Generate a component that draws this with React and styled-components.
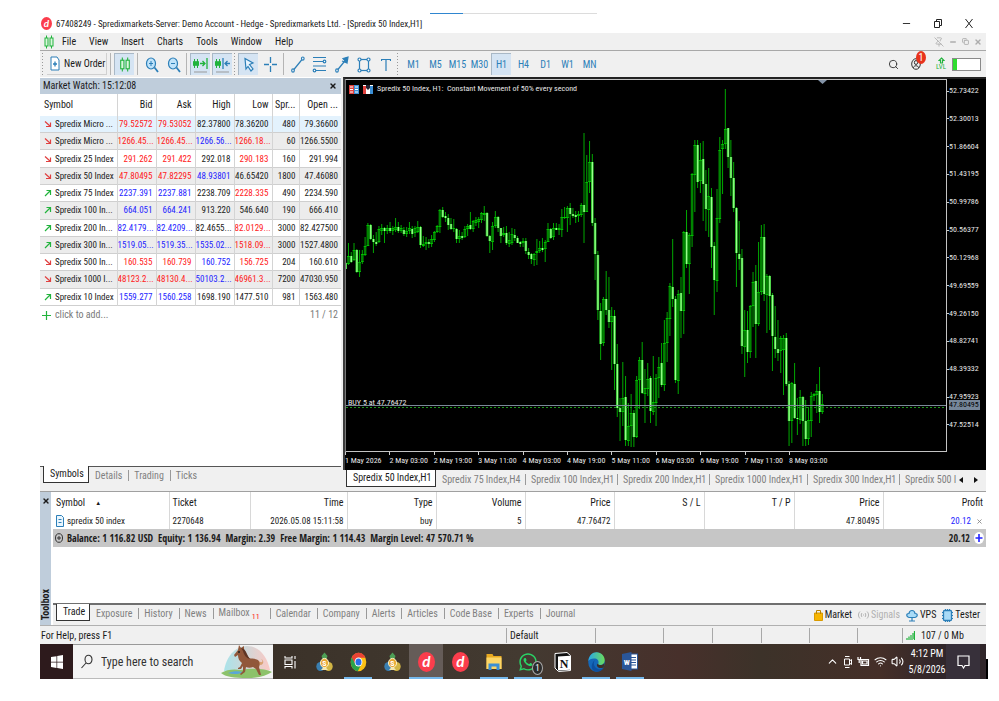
import React from 'react'
import styled, { createGlobalStyle } from 'styled-components'
import { Search, Minus, X, Copy, PinOff, ChevronUp, Wifi, Volume2 } from 'lucide-react'
import { FaWhatsapp } from 'react-icons/fa'

const GlobalStyle = createGlobalStyle`
  * {
    box-sizing: border-box;
  }
  body {
    margin: 0;
    background: #fff;
    color: #1b1b1b;
    font-family: "Roboto Condensed", Roboto, "Liberation Sans", sans-serif;
    font-size: 10px;
    line-height: 14px;
  }
  button, input {
    font: inherit;
    color: inherit;
    border: 0;
    padding: 0;
    margin: 0;
    background: none;
  }
  a {
    color: inherit;
    text-decoration: none;
  }
  svg {
    display: block;
    flex: none;
  }
  table {
    border-collapse: collapse;
    table-layout: fixed;
    width: 100%;
  }
  td, th {
    padding: 0;
    font-weight: 400;
    white-space: nowrap;
    overflow: hidden;
  }
`

// ---------- data ----------

const quotes = [
  { name: 'Spredix Micro ...', up: false, cells: [['79.52572', 'r'], ['79.53052', 'r'], ['82.37800'], ['78.36200'], ['480'], ['79.36600']] },
  { name: 'Spredix Micro ...', up: false, cells: [['1266.45...', 'r'], ['1266.45...', 'r'], ['1266.56...', 'b'], ['1266.18...', 'r'], ['60'], ['1266.5500']] },
  { name: 'Spredix 25 Index', up: false, cells: [['291.262', 'r'], ['291.422', 'r'], ['292.018'], ['290.183', 'r'], ['160'], ['291.994']] },
  { name: 'Spredix 50 Index', up: false, cells: [['47.80495', 'r'], ['47.82295', 'r'], ['48.93801', 'b'], ['46.65420'], ['1800'], ['47.46080']] },
  { name: 'Spredix 75 Index', up: true, cells: [['2237.391', 'b'], ['2237.881', 'b'], ['2238.709'], ['2228.335', 'r'], ['490'], ['2234.590']] },
  { name: 'Spredix 100 In...', up: true, cells: [['664.051', 'b'], ['664.241', 'b'], ['913.220'], ['546.640'], ['190'], ['666.410']] },
  { name: 'Spredix 200 In...', up: true, cells: [['82.4179...', 'b'], ['82.4209...', 'b'], ['82.4655...'], ['82.0129...', 'r'], ['3000'], ['82.427500']] },
  { name: 'Spredix 300 In...', up: true, cells: [['1519.05...', 'b'], ['1519.35...', 'b'], ['1535.02...', 'b'], ['1518.09...', 'r'], ['3000'], ['1527.4800']] },
  { name: 'Spredix 500 In...', up: false, cells: [['160.535', 'r'], ['160.739', 'r'], ['160.752', 'b'], ['156.725', 'r'], ['204'], ['160.610']] },
  { name: 'Spredix 1000 I...', up: false, cells: [['48123.2...', 'r'], ['48130.4...', 'r'], ['50103.2...', 'b'], ['46961.3...', 'r'], ['7200'], ['47030.950']] },
  { name: 'Spredix 10 Index', up: true, cells: [['1559.277', 'b'], ['1560.258', 'b'], ['1698.190'], ['1477.510'], ['981'], ['1563.480']] },
]

const prices = ['52.73422', '52.30013', '51.86604', '51.43195', '50.99786', '50.56377', '50.12968', '49.69559', '49.26150', '48.82741', '48.39332', '47.95923', '47.52514']
const times = ['1 May 2026', '2 May 03:00', '2 May 19:00', '3 May 11:00', '4 May 03:00', '4 May 19:00', '5 May 11:00', '6 May 03:00', '6 May 19:00', '7 May 11:00', '8 May 03:00']

// [high, body top, body bottom, low, 1 = falling]
const candles = [
  [182,183,189,189,1],[163,176,184,185,0],[172,176,182,183,1],[163,170,180,181,0],[169,170,192,193,1],[170,182,192,197,0],
  [170,174,182,184,0],[157,166,175,176,0],[143,145,166,166,0],[144,145,159,160,1],[155,159,162,173,1],[152,162,164,166,1],
  [146,149,162,163,0],[144,148,151,155,0],[147,148,151,163,1],[145,148,151,154,0],[142,148,151,153,1],[146,148,151,155,0],
  [138,147,150,152,0],[142,147,151,153,1],[145,148,151,153,0],[147,150,154,156,1],[147,151,154,157,0],[142,148,151,154,0],
  [146,149,154,158,1],[146,148,153,157,0],[141,147,152,153,0],[146,147,165,168,1],[156,164,166,167,0],[157,162,164,170,0],
  [159,162,164,168,1],[155,159,164,167,0],[151,152,160,162,0],[145,146,152,153,0],[129,130,147,153,0],[127,130,137,138,1],
  [132,136,138,142,1],[134,138,145,150,1],[138,144,149,150,1],[139,148,149,152,0],[148,149,159,163,1],[150,156,159,163,0],
  [152,156,158,160,1],[146,149,157,158,0],[144,146,149,156,0],[132,145,149,150,1],[140,141,149,152,0],[137,140,143,146,0],
  [137,139,142,148,0],[132,133,140,143,0],[126,133,135,141,0],[132,133,156,157,1],[155,156,161,173,1],[142,146,162,170,0],
  [131,137,146,148,0],[136,137,148,152,1],[148,148,156,163,1],[147,153,155,157,0],[146,153,163,165,1],[152,160,164,167,0],
  [148,154,163,165,0],[149,155,158,161,1],[156,158,163,163,1],[161,162,164,167,1],[158,161,163,167,0],[158,161,171,174,1],
  [168,172,175,179,1],[173,174,179,184,1],[173,174,180,186,0],[159,171,173,185,0],[161,168,171,173,0],[158,168,170,172,1],
  [160,162,169,182,0],[143,149,162,162,0],[148,149,158,159,1],[143,148,157,160,0],[143,148,150,150,1],[144,148,150,155,0],
  [129,137,150,157,0],[127,137,138,139,0],[126,128,138,152,0],[123,128,134,145,1],[128,134,136,138,1],[131,135,137,143,1],
  [131,134,136,142,0],[123,125,135,137,0],[53,125,132,163,1],[75,102,132,132,0],[61,82,102,113,0],[74,82,143,146,1],
  [138,143,174,200,1],[171,175,230,240,1],[223,231,264,280,1],[217,219,263,266,0],[191,219,230,235,1],[197,230,242,248,1],
  [227,236,242,290,0],[230,236,284,310,1],[264,284,328,337,1],[318,328,332,361,1],[282,318,332,346,0],[296,317,360,366,1],
  [323,346,361,366,0],[314,333,346,367,0],[330,333,357,367,1],[296,300,357,358,0],[277,280,300,329,0],[262,280,313,314,1],
  [289,308,314,343,0],[283,299,309,316,0],[296,298,331,343,1],[276,322,332,335,0],[294,298,323,346,0],[277,287,298,318,0],
  [263,283,305,307,1],[240,263,305,311,0],[232,238,263,282,0],[203,206,239,256,0],[159,207,219,227,1],[216,219,300,303,1],
  [210,214,301,314,0],[197,213,231,258,1],[151,152,231,254,0],[130,152,184,188,1],[153,155,184,214,0],[93,94,156,167,0],
  [60,65,95,132,0],[60,65,102,108,1],[63,80,101,113,0],[61,79,104,141,1],[90,104,129,151,1],[88,116,130,157,0],
  [108,117,167,188,1],[162,166,200,235,1],[109,138,201,212,0],[57,70,139,143,0],[60,64,69,114,0],[9,49,64,69,0],
  [48,48,77,88,1],[60,77,98,116,1],[82,98,128,132,1],[127,128,173,207,1],[141,174,179,190,1],[169,178,266,274,1],
  [230,250,267,297,0],[231,250,272,283,1],[225,226,272,278,0],[192,202,226,247,0],[185,201,244,278,1],[162,212,244,246,0],
  [145,157,212,215,0],[144,157,214,221,1],[194,196,215,253,0],[195,196,216,250,1],[213,215,256,291,1],[226,257,269,278,1],
  [240,269,273,281,1],[256,258,271,293,0],[255,258,270,315,0],[253,258,304,306,1],[301,304,341,366,1],[302,303,341,363,0],
  [283,304,338,339,1],[318,338,339,355,1],[310,317,340,344,0],[316,317,341,366,1],[320,341,359,366,1],[327,340,359,365,0],
  [312,316,341,357,0],[313,314,316,321,0],[304,311,315,333,0],[287,311,332,343,1],[314,324,332,334,0],
]

const chartTabs = [
  ['Spredix 75 Index,H4', 89], ['Spredix 100 Index,H1', 92], ['Spredix 200 Index,H1', 92],
  ['Spredix 1000 Index,H1', 98], ['Spredix 300 Index,H1', 92],
]

// ---------- window ----------

const Page = styled.main`
  padding: 13px 13px 22px 40px;
`

const Progress = styled.div`
  height: 1px;
  width: 167px;
  margin-left: 390px;
  background: linear-gradient(90deg, #2f86d0 33px, #dcdcdc 33px);
`

const Window = styled.div`
  position: relative;
`

const TitleBar = styled.header`
  display: flex;
  align-items: center;
  gap: 4px;
  height: 19px;
  padding: 0 12px 0 1px;
  h1 {
    margin: 0;
    flex: 1;
    font-size: 9px;
    font-weight: 400;
    white-space: nowrap;
  }
`

const WinButtons = styled.div`
  display: flex;
  align-items: center;
  gap: ${p => p.$gap}px;
  color: ${p => p.$color};
`

const MenuBar = styled.nav`
  display: flex;
  align-items: center;
  height: 18px;
  padding: 0 4px;
  background: #f0f0f0;
  border-bottom: 1px solid #a8a8a8;
  ul {
    display: flex;
    flex: 1;
    gap: 13px;
    margin: 0;
    padding: 0 0 0 8px;
    list-style: none;
  }
`

const ToolBar = styled.div`
  display: flex;
  align-items: center;
  height: 26px;
  padding-left: 2px;
  background: #f0f0f0;
  color: #2c7fb8;
`

const Tool = styled.button`
  display: flex;
  align-items: center;
  justify-content: center;
  width: 20px;
  height: 22px;
  margin-right: 2px;
  background: ${p => (p.$on ? '#d5e4f3' : 'none')};
  border-left: 1px solid ${p => (p.$on ? '#a9b8c6' : 'transparent')};
  border-top: 1px solid ${p => (p.$on ? '#a9b8c6' : 'transparent')};
`

const NewOrder = styled.button`
  display: flex;
  align-items: center;
  gap: 4px;
  height: 22px;
  width: 60px;
  margin: 0 2px 0 1px;
  padding-left: 3px;
  color: #1b1b1b;
  white-space: nowrap;
  border-right: 1px solid #d0d0d0;
  border-bottom: 1px solid #d0d0d0;
`

const Divider = styled.i`
  width: 1px;
  height: 22px;
  margin: 0 3px 0 1px;
  background: #b4b4b4;
`

const Grip = styled.i`
  width: 1px;
  height: 22px;
  margin-right: ${p => p.$gap || 3}px;
  background: repeating-linear-gradient(#9a9a9a 0 1px, transparent 1px 3px);
`

const ToolRight = styled.div`
  display: flex;
  align-items: center;
  gap: 6px;
  margin-left: auto;
  padding-right: 5px;
  color: #333;
`

const Account = styled.button`
  position: relative;
  display: flex;
  margin: 0 9px 0 6px;
  span {
    position: absolute;
    left: 5px;
    top: -7px;
    width: 10px;
    height: 13px;
    border-radius: 50%;
    background: #e8331c;
    color: #fff;
    line-height: 13px;
    text-align: center;
  }
`

const Level = styled.div`
  width: 10px;
  color: #21b33c;
  font-size: 7px;
  line-height: 7px;
  text-align: center;
  svg {
    margin: 0 auto;
  }
`

const Battery = styled.div`
  width: 29px;
  height: 13px;
  border: 1px solid #8a8a8a;
  background: linear-gradient(90deg, #2fdc2f 4px, #fff 4px);
`

// ---------- market watch ----------

const Main = styled.div`
  display: flex;
  min-height: 414px;
  background: #f0f0f0;
`

const Watch = styled.section`
  display: flex;
  flex-direction: column;
  flex: 0 0 301px;
  margin-right: 2px;
  background: #fff;
`

const WatchHead = styled.div`
  display: flex;
  align-items: center;
  justify-content: space-between;
  height: 16px;
  margin-top: 1px;
  padding: 0 4px 0 3px;
  background: #bfcddb;
`

const WatchTable = styled.table`
  height: 212px;
  th, td {
    text-align: right;
    padding-right: 3px;
    border-left: 1px solid #d4d4d4;
  }
  th:first-child, td:first-child {
    text-align: left;
    padding-left: 4px;
    border-left: 0;
  }
  thead tr {
    height: 22px;
  }
  tbody {
    font-size: 9px;
  }
`

const WatchRow = styled.tr`
  background: ${p => p.$bg};
  border-bottom: 1px solid #cfcfcf;
`

const Num = styled.td`
  color: ${p => ({ r: '#ff2020', b: '#2424ff' }[p.$tone] || '#1b1b1b')};
`

const SymbolName = styled.span`
  display: flex;
  align-items: center;
  gap: 3px;
`

const AddRow = styled.div`
  display: flex;
  align-items: center;
  justify-content: space-between;
  height: 18px;
  padding: 0 3px 0 2px;
  color: #7a7a7a;
  button {
    display: flex;
    align-items: center;
    gap: 4px;
  }
`

const WatchTabs = styled.div`
  display: flex;
  height: 25px;
  margin-top: auto;
  padding-left: 3px;
  background: #f0f0f0;
  border-top: 1px solid #555;
`

const separator = 'linear-gradient(#999, #999) 0 3px / 1px 11px no-repeat'

const Tab = styled.button`
  height: 17px;
  width: ${p => (p.$w ? p.$w + 'px' : 'auto')};
  flex: none;
  margin-top: ${p => (p.$on ? -1 : 0)}px;
  padding: 0 6px;
  white-space: nowrap;
  color: ${p => (p.$on ? '#1b1b1b' : '#808080')};
  background: ${p => (p.$on ? '#fff' : p.$bar ? separator : 'none')};
  border: ${p => (p.$on ? '1px solid #333' : '0')};
  border-top: 0;
  sub {
    color: #ff2020;
    font-size: 8px;
    line-height: 8px;
    padding: 0 4px 0 2px;
  }
`

// ---------- chart ----------

const ChartPane = styled.section`
  flex: 1;
  min-width: 0;
  display: flex;
  flex-direction: column;
`

const ChartBox = styled.div`
  display: grid;
  grid-template-columns: 1fr 39px;
  grid-template-rows: 373px 18px;
  border-top: 2px solid #222;
  border-left: 2px solid #3c3c3c;
  background: #000;
  color: #e6e6e6;
  font-size: 8px;
  line-height: 10px;
`

const Plot = styled.div`
  position: relative;
  min-width: 0;
  overflow: hidden;
  border: 1px solid #c4c4c4;
  border-left-color: #777;
`

const ChartTitle = styled.div`
  position: absolute;
  left: 3px;
  top: 4px;
  display: flex;
  align-items: center;
  gap: 4px;
  white-space: pre;
`

const OrderLabel = styled.span`
  position: absolute;
  left: 2px;
  top: 318px;
`

// bid line and the open position line run across the whole plot
const PriceLines = styled.div`
  position: absolute;
  left: 0;
  right: 0;
  top: 325px;
  height: 4px;
  border-top: 1px solid #7c8a99;
  background: repeating-linear-gradient(90deg, #1c961c 0 2px, transparent 2px 4px) 0 1px / 100% 1px no-repeat;
`

const PriceScale = styled.div`
  position: relative;
  display: flex;
  flex-direction: column;
  justify-content: space-between;
  padding: 7px 0 22px;
  span {
    display: flex;
    align-items: center;
  }
  span::before {
    content: "";
    width: 2px;
    height: 1px;
    background: #ccc;
  }
`

const LastPrice = styled.div`
  position: absolute;
  left: 2px;
  top: 321px;
  width: 31px;
  background: #76879a;
  color: #000;
`

const TimeScale = styled.div`
  display: grid;
  grid-template-columns: repeat(10, 1fr) 158px;
  grid-column: 1 / 2;
  white-space: nowrap;
  span {
    padding-top: 4px;
    background: linear-gradient(#ccc, #ccc) 0 0 / 1px 3px no-repeat;
  }
`

const ChartTabs = styled.div`
  display: flex;
  flex: 1;
  padding: 1px 6px 0 3px;
  div {
    display: flex;
    flex: 1;
    min-width: 0;
    overflow: hidden;
  }
`

const Arrows = styled.span`
  display: flex;
  align-items: center;
  gap: 11px;
  height: 17px;
  padding: 0 2px 0 0;
`

// ---------- toolbox ----------

const Toolbox = styled.section`
  display: flex;
  min-height: 135px;
  border-top: 1px solid #a0a0a0;
  border-bottom: 1px solid #b0b0b0;
`

const Strip = styled.div`
  display: flex;
  flex-direction: column;
  justify-content: space-between;
  align-items: center;
  flex: 0 0 11px;
  margin-right: 2px;
  padding: 5px 0;
  background: #bfcddb;
  h2 {
    margin: 0;
    font-size: 10px;
    line-height: 11px;
    font-weight: 700;
    writing-mode: vertical-rl;
    transform: rotate(180deg);
  }
`

const ToolboxBody = styled.div`
  flex: 1;
  min-width: 0;
  display: flex;
  flex-direction: column;
`

const Trades = styled.table`
  th, td {
    height: 17px;
    text-align: right;
    padding: 1px 3px 0 0;
    border-left: 1px solid #d8d8d8;
  }
  th {
    height: 20px;
  }
  td {
    font-size: 9px;
  }
  th:nth-child(-n+2), td:nth-child(-n+2) {
    text-align: left;
    padding-left: 3px;
  }
  th:first-child, td:first-child {
    border-left: 0;
  }
  td:last-child {
    color: #2424ff;
  }
  td button {
    color: #888;
    margin-left: 5px;
    vertical-align: middle;
  }
`

const SortMark = styled.span`
  margin-left: 10px;
  font-size: 6px;
  vertical-align: 1px;
`

const Summary = styled.div`
  display: flex;
  align-items: center;
  gap: 4px;
  height: 18px;
  padding: 0 2px;
  background: #c6c6c6;
  font-family: "Open Sans Condensed", "Roboto Condensed", Roboto, sans-serif;
  font-weight: 700;
  white-space: pre;
  b {
    margin-left: auto;
  }
`

const ToolboxTabs = styled.div`
  display: flex;
  height: 22px;
  margin-top: auto;
  padding: 0 6px 0 3px;
  background: #f0f0f0;
  border-top: 2px solid #6f6f6f;
`

const Services = styled.div`
  display: flex;
  align-items: center;
  gap: 6px;
  margin-left: auto;
`

const Service = styled.a`
  display: flex;
  align-items: center;
  gap: 2px;
  color: ${p => (p.$off ? '#b0b0b0' : '#1b1b1b')};
`

const StatusBar = styled.footer`
  display: grid;
  grid-template-columns: 1fr 89px 68px 49px 49px 48px 48px 45px 84px;
  height: 18px;
  background: #f0f0f0;
  line-height: 14px;
  span {
    display: flex;
    align-items: center;
    gap: 6px;
    margin: 2px 0 1px;
    padding-left: 3px;
    border-left: 1px solid #a8a8a8;
  }
  span:first-child {
    padding-left: 1px;
    border-left: 0;
  }
`

// ---------- taskbar ----------

const TaskBar = styled.footer`
  display: flex;
  height: 35px;
  color: #fff;
  background: linear-gradient(90deg, #2d1a1c 33px, #3b3229 240px, #433a31 480px, #47302b 640px, #3c3229 720px, #452f28 840px, #30262a 900px);
`

const StartButton = styled.button`
  width: 33px;
  display: flex;
  align-items: center;
  justify-content: center;
`

const SearchBox = styled.label`
  display: flex;
  align-items: center;
  width: 200px;
  padding-left: 8px;
  background: #f3f3f3;
  color: #333;
  border-top: 1px solid #999;
  border-bottom: 1px solid #bbb;
  input {
    flex: 1;
    min-width: 0;
    margin-left: 8px;
    outline: 0;
    font-size: 12px;
    &::placeholder {
      color: #333;
      opacity: 1;
    }
  }
`

const TaskItem = styled.button`
  position: relative;
  display: flex;
  align-items: center;
  justify-content: center;
  width: 34px;
  background: ${p => (p.$active ? '#655c58' : 'none')};
  &::after {
    content: "";
    position: absolute;
    left: ${p => (p.$active ? 0 : 3)}px;
    right: ${p => (p.$active ? 0 : 3)}px;
    bottom: 0;
    height: 2px;
    background: ${p => (p.$open ? '#76b9ed' : 'none')};
  }
`

const Badge = styled.span`
  position: absolute;
  right: 2px;
  bottom: 4px;
  width: 11px;
  height: 14px;
  border: 1px solid #aaa;
  border-radius: 50%;
  background: #2c2c2c;
  font-size: 9px;
  line-height: 12px;
`

const Tray = styled.div`
  display: flex;
  align-items: center;
  gap: 4px;
  margin-left: auto;
`

const Clock = styled.time`
  width: 38px;
  text-align: center;
  line-height: 16px;
`

const Notices = styled.button`
  display: flex;
  align-items: center;
  justify-content: center;
  align-self: stretch;
  width: 34px;
  margin: 0 6px 0 -4px;
  background: #37303a;
`

const Edge = styled.i`
  position: absolute;
  right: -2px;
  bottom: 0;
  width: 2px;
  height: 20px;
  background: #000;
`

// ---------- icons ----------

const DLogo = ({ w = 11, h = 13 }) => (
  <svg width={w} height={h} viewBox="0 0 20 24" preserveAspectRatio="none">
    <ellipse cx="10" cy="12" rx="10" ry="12" fill="#fb3d4c" />
    <text x="10" y="18" textAnchor="middle" fontSize="18" fontWeight="700" fontStyle="italic" fill="#fff" fontFamily="Lato, sans-serif">d</text>
  </svg>
)

const CandlesIcon = ({ w = 10, h = 14 }) => (
  <svg width={w} height={h} viewBox="0 0 10 14" fill="#d9f7dc" stroke="#21b33c">
    <path d="M2.5 0.5v13M7.5 0.5v13" />
    <rect x="1" y="3" width="3" height="8" />
    <rect x="6" y="3" width="3" height="8" />
  </svg>
)

const ShiftIcon = ({ back }) => (
  <svg width="15" height="17" viewBox="0 0 15 17" fill="none" stroke="#21b33c">
    <path d="M1.5 3v9M4.5 3v9" />
    <path d="M0.5 5.5h2v4h-2zM3.5 5.5h2v4h-2z" fill="#21b33c" />
    {back
      ? <g stroke="#2c7fb8" strokeWidth="1.3"><path d="M8 2v11" /><path d="M15 7.5h-5M12.5 5L10 7.5l2.5 2.5" /></g>
      : <g strokeWidth="1.3"><path d="M7 7.5h5M9.5 5l2.5 2.5L9.5 10" /><path d="M14 2v11" /></g>}
    <path d="M1 16h13" stroke="#999" />
  </svg>
)

const ZoomIcon = ({ plus }) => (
  <svg width="14" height="16" viewBox="0 0 14 16" fill="none" stroke="#2c7fb8">
    <ellipse cx="6" cy="6.5" rx="4.5" ry="5.5" fill="#bfe3fa" strokeWidth="1.2" />
    <path d="M4 6.5h4" />
    {plus && <path d="M6 4v5" />}
    <path d="M9.5 10.5L13 15" strokeWidth="1.8" />
  </svg>
)

const CursorIcon = () => (
  <svg width="12" height="15" viewBox="0 0 12 15" fill="#e8f4fd" stroke="#2c7fb8" strokeWidth="1.2">
    <path d="M2 1.500l8 4.500-3.500 1.500L10 12l-2 2-3-4.500L3 12z" />
  </svg>
)

const LineIcon = ({ arrow }) => (
  <svg width="14" height="17" viewBox="0 0 14 17" fill="none" stroke="#2c7fb8" strokeWidth="1.2">
    <path d="M2.5 14L11 3.500" />
    <ellipse cx="2" cy="14.5" rx="1.3" ry="1.6" fill="#fff" />
    {arrow
      ? <path d="M8 2.500L13 1l-1 6zM7 5l5 2" fill="#2c7fb8" />
      : <ellipse cx="11.8" cy="2.6" rx="1.3" ry="1.6" fill="#fff" />}
  </svg>
)

const LevelsIcon = () => (
  <svg width="15" height="17" viewBox="0 0 15 17" fill="none" stroke="#2c7fb8" strokeWidth="1.2">
    <path d="M1 1.500h13M1 5.500h10M1 10h13M4 14.500h10" />
    <circle cx="12.5" cy="5.5" r="1.3" fill="#fff" />
    <circle cx="2.5" cy="14.5" r="1.3" fill="#fff" />
  </svg>
)

const ShapeIcon = () => (
  <svg width="14" height="16" viewBox="0 0 14 16" fill="#fff" stroke="#2c7fb8" strokeWidth="1.2">
    <rect x="2.5" y="2.5" width="9" height="11" fill="none" />
    <circle cx="2.5" cy="2.5" r="1.5" />
    <circle cx="11.5" cy="2.5" r="1.5" />
    <circle cx="2.5" cy="13.5" r="1.5" />
    <circle cx="11.5" cy="13.5" r="1.5" />
  </svg>
)

const StrokeIcon = ({ w, h, d, color = '#2c7fb8', sw = 1.2, fill = 'none' }) => (
  <svg width={w} height={h} viewBox={`0 0 ${w} ${h}`} fill={fill} stroke={color} strokeWidth={sw}>
    <path d={d} />
  </svg>
)

const ChromeIcon = () => (
  <svg width="17" height="20" viewBox="0 0 24 24" preserveAspectRatio="none">
    <circle cx="12" cy="12" r="11" fill="#fbc116" />
    <path d="M12 12L2.500 6.500A11 11 0 0 0 11 23l5.500-9z" fill="#2ba24c" />
    <path d="M2.500 6.500L8 15l4-8h9.800A11 11 0 0 0 2.500 6.500z" fill="#ea4335" />
    <circle cx="12" cy="12" r="5.5" fill="#fff" />
    <circle cx="12" cy="12" r="4.2" fill="#2a6fe8" />
  </svg>
)

const TraderIcon = () => (
  <svg width="17" height="20" viewBox="0 0 17 20">
    <path d="M8.5 0.500l3 3.500-1 3 3.500 5H3l3.500-5-1-3z" fill="#4d9f56" />
    <ellipse cx="4.5" cy="14.5" rx="4.2" ry="4.5" fill="#3a7fb0" />
    <ellipse cx="12.5" cy="14.5" rx="4.2" ry="4.5" fill="#d2b544" />
    <path d="M5 18h7l-3.500-4z" fill="#f2e7b0" />
    <ellipse cx="8.5" cy="11" rx="4" ry="4.6" fill="#e8a531" stroke="#fff3c9" />
    <text x="8.5" y="14" fontSize="8" textAnchor="middle" fill="#fff" fontWeight="700">S</text>
  </svg>
)

const FolderIcon = () => (
  <svg width="16" height="18" viewBox="0 0 16 18">
    <path d="M0.5 1h6l1 2h8v13h-15z" fill="#e8a920" />
    <path d="M0.5 4.500h15V16h-15z" fill="#fcd667" />
    <path d="M2.5 17v-6.500h11V17h-3v-3.500h-5V17z" fill="#3c8fd4" />
  </svg>
)

const NotionIcon = () => (
  <svg width="17" height="20" viewBox="0 0 17 20">
    <path d="M1 1.500L13 0.500l3.500 3v15l-12 1L1 16z" fill="#111" stroke="#fff" />
    <path d="M4 4.500l12-.8v14l-12 .9z" fill="#fff" />
    <text x="10" y="15.5" fontSize="12" fontWeight="700" textAnchor="middle" fill="#111" fontFamily="Liberation Serif, serif">N</text>
  </svg>
)

const EdgeIcon = () => (
  <svg width="17" height="20" viewBox="0 0 17 20">
    <defs>
      <linearGradient id="edgeTop" x1="0" x2="1">
        <stop offset="0" stopColor="#2aa7e8" />
        <stop offset="1" stopColor="#6bdc5a" />
      </linearGradient>
    </defs>
    <ellipse cx="8.5" cy="10" rx="8.3" ry="9.8" fill="#1467b8" />
    <path d="M.3 9C1 3 4.500.2 8.500.2c5 0 8.200 4 8.200 8 0 3-2 4.800-4.500 4.800-1.500 0-2.200-.8-2-1.500 1-1.500.2-4.500-3-5C4 6 1 7.500.3 9z" fill="url(#edgeTop)" />
    <path d="M7 8c-2 2-1.500 7.500 3 9 2.500.6 4.500 0 6-1.500-1.500 3-5 4.500-8 4.200C3 19 2 12 7 8z" fill="#0d4f9e" />
    <path d="M10.200 11.500c-.3 1 .6 1.700 2 1.600 1.500 0 3-.6 4-1.900.2 1.700.1 3-.9 4.300-2 1-4.800.6-6-1-.8-1.300-.4-2.500.9-3z" fill="#3b2f29" />
  </svg>
)

const WordIcon = () => (
  <svg width="16" height="19" viewBox="0 0 16 19">
    <rect x="7" y="2" width="8.5" height="15" fill="#fff" stroke="#2a5699" />
    <path d="M9 5.500h5M9 8h5M9 10.500h5M9 13h5" stroke="#2a5699" />
    <path d="M0 2l9.500-2v19L0 17z" fill="#2a5699" />
    <text x="4.7" y="13" fontSize="8" fontWeight="700" textAnchor="middle" fill="#fff">W</text>
  </svg>
)

const Horse = () => (
  <svg width="52" height="33" viewBox="0 0 52 33">
    <defs>
      <linearGradient id="sky" x1="0" x2="1">
        <stop offset="0" stopColor="#a9e3ea" />
        <stop offset="1" stopColor="#fbc9c4" />
      </linearGradient>
    </defs>
    <path d="M3 26C5 12 14 1 26 1s20 10 23 24z" fill="url(#sky)" />
    <path d="M0 28c6-4 14-4 20-3 9-2 24-2 31 2-6 4-14 6-25 6C14 33 4 32 0 28z" fill="#8cc26a" />
    <path d="M7 28c5-2 10-2 15-1-3 2-9 3-15 1z" fill="#5aa6d8" />
    <path d="M31 15c5-1 8 3 10 2 1-1 0-2-1-3 3 1 3 5 0 6-2 0-3-1-5-1z" fill="#d9a273" />
    <path d="M13 10l4-5 1-5 2 3 3-2 0 4c2 3 3 6 5 8 3 1 6 0 9 2 2 2 2 5 1 7l2 8h-2l-3-6-3-2c-2 1-5 1-7 0l-1 5-4 3-1-1 3-3 0-5-2 3-3 0 0-1 2-1 2-4c-3-2-4-5-4-8l-3 2z" fill="#91573a" />
    <path d="M20 3l3 1c3 3 3 7 6 10-4-1-6-4-7-8z" fill="#5f3524" />
    <circle cx="18" cy="7" r="1" fill="#222" />
  </svg>
)

const Trend = ({ up }) => (
  <StrokeIcon w={8} h={8} color={up ? '#21b33c' : '#e04040'} d={up ? 'M1 7L6.500 1.500M2.500 1.500h4v4.500' : 'M1 1.500l5.500 5M6.500 2.500v4h-4.500'} />
)

const frames = ['M1', 'M5', 'M15', 'M30', 'H1', 'H4', 'D1', 'W1', 'MN']

const Candle = ({ x, c }) => {
  const [high, top, bottom, low, down] = c
  const h = Math.max(bottom - top, 1)
  return (
    <g>
      <rect x={x - 0.5} y={high} width="1" height={low - high} fill="#00a800" />
      <rect x={x - 1.3} y={top} width="2.6" height={h} fill={down ? '#25c425' : '#008400'} />
      {down
        ? <rect x={x - 0.5} y={top} width="1.2" height={h} fill="#9dff8f" />
        : <path d={`M${x - 1.3} ${top + 0.5}h2.6M${x - 1.3} ${top + h - 0.5}h2.6`} stroke="#00c000" />}
    </g>
  )
}

const App = () => (
  <Page>
    <GlobalStyle />
    <Progress />
    <Window>
      <TitleBar>
        <DLogo />
        <h1>67408249 - Spredixmarkets-Server: Demo Account - Hedge - Spredixmarkets Ltd. - [Spredix 50 Index,H1]</h1>
        <WinButtons $gap={21} $color="#222">
          <button aria-label="Minimize"><Minus size={11} strokeWidth={2} /></button>
          <button aria-label="Restore"><StrokeIcon w={10} h={11} sw={1} color="#222" d="M1.500 3.500h5v6h-5zM3.500 3v-1.500h5v6H7" /></button>
          <button aria-label="Close"><StrokeIcon w={10} h={11} sw={1} color="#222" d="M1.500 1l7 9M8.500 1l-7 9" /></button>
        </WinButtons>
      </TitleBar>

      <MenuBar>
        <CandlesIcon />
        <ul>
          {['File', 'View', 'Insert', 'Charts', 'Tools', 'Window', 'Help'].map(m => (
            <li key={m}><a href="#menu">{m}</a></li>
          ))}
        </ul>
        <WinButtons $gap={5} $color="#adadad">
          <button aria-label="Unpin"><PinOff size={10} /></button>
          <button aria-label="Minimize chart"><Minus size={8} strokeWidth={4} /></button>
          <button aria-label="Restore chart"><Copy size={7} strokeWidth={3} /></button>
          <button aria-label="Close chart"><X size={8} strokeWidth={4} /></button>
        </WinButtons>
      </MenuBar>

      <ToolBar>
        <Grip />
        <NewOrder>
          <svg width="10" height="15" viewBox="0 0 10 15" fill="#fff" stroke="#2c7fb8">
            <path d="M1 1h6l2 3v10H1z" />
            <path d="M3 8h4M5 5.500v5" strokeWidth="1.3" />
          </svg>
          New Order
        </NewOrder>
        <Divider />
        <Tool $on aria-label="Candles"><CandlesIcon w={12} h={15} /></Tool>
        <Divider />
        <Tool aria-label="Zoom in"><ZoomIcon plus /></Tool>
        <Tool aria-label="Zoom out"><ZoomIcon /></Tool>
        <Divider />
        <Tool $on aria-label="Auto scroll"><ShiftIcon /></Tool>
        <Tool $on aria-label="Chart shift"><ShiftIcon back /></Tool>
        <Grip />
        <Tool $on aria-label="Cursor"><CursorIcon /></Tool>
        <Tool aria-label="Crosshair"><StrokeIcon w={13} h={15} sw={1.3} d="M6.500 0v6M6.500 9v6M0 7.500h5M8 7.500h5" /></Tool>
        <Divider />
        <Tool aria-label="Trend line"><LineIcon /></Tool>
        <Tool aria-label="Levels"><LevelsIcon /></Tool>
        <Tool aria-label="Arrow line"><LineIcon arrow /></Tool>
        <Tool aria-label="Shapes"><ShapeIcon /></Tool>
        <Tool aria-label="Text"><StrokeIcon w={10} h={13} d="M0.500 3V1.500h9V3M5 1.500V13" /></Tool>
        <Grip $gap={5} />
        {frames.map(f => <Tool key={f} $on={f === 'H1'}>{f}</Tool>)}
        <ToolRight>
          <Search size={11} />
          <Account aria-label="Account">
            <svg width="10" height="12" viewBox="0 0 10 12" fill="none" stroke="#333">
              <ellipse cx="5" cy="6" rx="4.3" ry="5.3" />
              <ellipse cx="5" cy="4.5" rx="1.6" ry="2" />
              <path d="M2 10c1-3 5-3 6 0" />
            </svg>
            <span>1</span>
          </Account>
          <Level>
            <StrokeIcon w={7} h={7} color="#21b33c" d="M3.500 1L6 3.500H4.500V6h-2V3.500H1z" />
            LVL
          </Level>
          <Battery />
        </ToolRight>
      </ToolBar>

      <Main>
        <Watch>
          <WatchHead>
            Market Watch: 15:12:08
            <button aria-label="Close market watch"><X size={8} strokeWidth={4} /></button>
          </WatchHead>
          <WatchTable>
            <colgroup>
              {[77, 39, 39, 39, 38, 27, 42].map((w, i) => <col key={i} width={w} />)}
            </colgroup>
            <thead>
              <tr>
                {['Symbol', 'Bid', 'Ask', 'High', 'Low', 'Spr...', 'Open ...'].map(h => <th key={h}>{h}</th>)}
              </tr>
            </thead>
            <tbody>
              {quotes.map((q, i) => (
                <WatchRow key={i} $bg={i === 0 ? '#e3f2fd' : i % 2 ? '#ececec' : '#fff'}>
                  <td><SymbolName><Trend up={q.up} />{q.name}</SymbolName></td>
                  {q.cells.map(([v, tone], j) => <Num key={j} $tone={tone}>{v}</Num>)}
                </WatchRow>
              ))}
            </tbody>
          </WatchTable>
          <AddRow>
            <button><StrokeIcon w={9} h={9} color="#21b33c" d="M4.500 0v9M0 4.500h9" />click to add...</button>
            <span>11 / 12</span>
          </AddRow>
          <WatchTabs>
            <Tab $on $w={46}>Symbols</Tab>
            <Tab>Details</Tab>
            <Tab $bar>Trading</Tab>
            <Tab $bar>Ticks</Tab>
          </WatchTabs>
        </Watch>

        <ChartPane>
          <ChartBox>
            <Plot>
              <svg width="600" height="371">
                {candles.map((c, i) => <Candle key={i} x={i * 2.771 - 0.3} c={c} />)}
                <path d="M472 0h9l-4.500 4z" fill="#8494a8" />
              </svg>
              <ChartTitle>
                <svg width="10" height="9" viewBox="0 0 10 9">
                  <path d="M0 0h5v9H0z" fill="#e2433f" />
                  <path d="M5 0h5v9H5z" fill="#3b8fd6" />
                  <path d="M1 2h3M1 4.500h3M1 7h3M6 2h3M6 4.500h3M6 7h3" stroke="#fff" />
                </svg>
                <svg width="10" height="9" viewBox="0 0 10 9">
                  <path d="M0 0h10v9H0z" fill="#fff" />
                  <path d="M0 1h3v8H0z" fill="#e2433f" />
                  <path d="M7 1h3v8H7z" fill="#3b8fd6" />
                  <path d="M3 0h4v3L5 5 3 3z" fill="#223" />
                </svg>
                <span>Spredix 50 Index, H1:  Constant Movement of 50% every second</span>
              </ChartTitle>
              <OrderLabel>BUY 5 at 47.76472</OrderLabel>
              <PriceLines />
            </Plot>
            <PriceScale>
              {prices.map(p => <span key={p}>{p}</span>)}
              <LastPrice>47.80495</LastPrice>
            </PriceScale>
            <TimeScale>
              {times.map(t => <span key={t}>{t}</span>)}
            </TimeScale>
          </ChartBox>
          <ChartTabs>
            <Tab $on $w={90}>Spredix 50 Index,H1</Tab>
            <div>
              {chartTabs.map(([t, w], i) => <Tab key={t} $w={w} $bar={i > 0}>{t}</Tab>)}
              <Tab $bar>Spredix 500 I</Tab>
            </div>
            <Arrows>
              <StrokeIcon w={4} h={6} fill="#111" color="none" d="M4 0v6L0 3z" />
              <StrokeIcon w={4} h={6} fill="#111" color="none" d="M0 0v6l4-3z" />
            </Arrows>
          </ChartTabs>
        </ChartPane>
      </Main>

      <Toolbox>
        <Strip>
          <button aria-label="Close toolbox"><X size={8} strokeWidth={4} /></button>
          <h2>Toolbox</h2>
        </Strip>
        <ToolboxBody>
          <Trades>
            <colgroup>
              {[116, 81, 97, 89, 89, 89, 90, 90, 89].map((w, i) => <col key={i} width={w} />)}
              <col />
            </colgroup>
            <thead>
              <tr>
                <th>Symbol<SortMark>▲</SortMark></th>
                {['Ticket', 'Time', 'Type', 'Volume', 'Price', 'S / L', 'T / P', 'Price', 'Profit'].map((h, i) => <th key={i}>{h}</th>)}
              </tr>
            </thead>
            <tbody>
              <tr>
                <td>
                  <SymbolName>
                    <StrokeIcon w={8} h={12} sw={1} fill="#e9f5fd" d="M0.500 0.500h5l2 2v9h-7zM2.500 4.500h3M2.500 7.500h3" />
                    spredix 50 index
                  </SymbolName>
                </td>
                <td>2270648</td>
                <td>2026.05.08 15:11:58</td>
                <td>buy</td>
                <td>5</td>
                <td>47.76472</td>
                <td />
                <td />
                <td>47.80495</td>
                <td>20.12<button aria-label="Close position"><X size={7} strokeWidth={3} /></button></td>
              </tr>
            </tbody>
          </Trades>
          <Summary>
            <svg width="8" height="10" viewBox="0 0 8 10" fill="none" stroke="#333">
              <ellipse cx="4" cy="5" rx="3.5" ry="4.3" />
              <path d="M2 5h4M4 3v4" />
            </svg>
            <span>Balance: 1 116.82 USD  Equity: 1 136.94  Margin: 2.39  Free Margin: 1 114.43  Margin Level: 47 570.71 %</span>
            <b>20.12</b>
            <svg width="10" height="12" viewBox="0 0 10 12">
              <ellipse cx="5" cy="6" rx="5" ry="6" fill="#fff" />
              <path d="M1.500 6h7M5 2v8" stroke="#2424ff" strokeWidth="1.6" />
            </svg>
          </Summary>
          <ToolboxTabs>
            <Tab $on $w={34}>Trade</Tab>
            <Tab>Exposure</Tab>
            <Tab $bar>History</Tab>
            <Tab $bar>News</Tab>
            <Tab $bar>Mailbox<sub>11</sub></Tab>
            {['Calendar', 'Company', 'Alerts', 'Articles', 'Code Base', 'Experts', 'Journal'].map(t => (
              <Tab key={t} $bar>{t}</Tab>
            ))}
            <Services>
              <Service href="#market">
                <svg width="9" height="12" viewBox="0 0 9 12"><path d="M0.500 4h8v7.500h-8z" fill="#f7b500" stroke="#d99a00" /><path d="M2.500 5V1.500h4V5" fill="none" stroke="#b98200" /></svg>
                Market
              </Service>
              <Service href="#signals" $off>
                <StrokeIcon w={11} h={8} color="#b0b0b0" sw={1} d="M2 0.500c-2 2-2 5 0 7M4 2c-1 1-1 3 0 4M9 0.500c2 2 2 5 0 7M7 2c1 1 1 3 0 4M5 4h1" />
                Signals
              </Service>
              <Service href="#vps">
                <StrokeIcon w={12} h={13} fill="#a9dbf7" d="M3 8.500c-3-.5-3-4 0-4 .5-4 5.500-4 6 0 3 0 3 3.500 0 4zM6 8.500v4M3 12h6" />
                VPS
              </Service>
              <Service href="#tester">
                <svg width="11" height="13" viewBox="0 0 11 13" fill="#a9dbf7" stroke="#2c7fb8">
                  <path d="M3.500 0v13M5.500 0v13M7.500 0v13M0 3.500h11M0 6.500h11M0 9.500h11" />
                  <rect x="1.5" y="1.5" width="8" height="10" rx="1" strokeWidth="1.3" />
                </svg>
                Tester
              </Service>
            </Services>
          </ToolboxTabs>
        </ToolboxBody>
      </Toolbox>

      <StatusBar>
        <span>For Help, press F1</span>
        <span>Default</span>
        <span /><span /><span /><span /><span /><span />
        <span>
          <StrokeIcon w={9} h={9} color="#21b33c" d="M1 9V7M3 9V5.500M5 9V4M7 9V2M8.500 9V0" />
          107 / 0 Mb
        </span>
      </StatusBar>

      <TaskBar>
        <StartButton aria-label="Start">
          <svg width="12" height="14" viewBox="0 0 12 14" fill="#fff">
            <path d="M0 2l5.500-.8v5.500H0zM6.200 1L12 0v6.700H6.200zM0 7.400h5.500v5.500L0 12zM6.200 7.400H12V14l-5.800-1z" />
          </svg>
        </StartButton>
        <SearchBox>
          <StrokeIcon w={12} h={15} color="#333" sw={1.1} d="M11 5.500a3.500 4.300 0 1 1-7 0a3.500 4.300 0 1 1 7 0zM5 9L0.500 14" />
          <input type="text" aria-label="Search" placeholder="Type here to search" />
          <Horse />
        </SearchBox>
        <TaskItem aria-label="Task view"><StrokeIcon w={13} h={14} color="#fff" sw={1.1} d="M1 1v2h7V1M1 13.500v-2h7v2M1 5h7v4.500H1zM11 1v3M11 6v7.500" /></TaskItem>
        <TaskItem aria-label="MetaTrader"><TraderIcon /></TaskItem>
        <TaskItem $open aria-label="Chrome"><ChromeIcon /></TaskItem>
        <TaskItem aria-label="MetaTrader 5"><TraderIcon /></TaskItem>
        <TaskItem $open $active aria-label="Deriv"><DLogo w={17} h={20} /></TaskItem>
        <TaskItem aria-label="Deriv 2"><DLogo w={17} h={20} /></TaskItem>
        <TaskItem $open aria-label="Explorer"><FolderIcon /></TaskItem>
        <TaskItem $open aria-label="WhatsApp"><FaWhatsapp size={20} color="#2ad366" /><Badge>1</Badge></TaskItem>
        <TaskItem aria-label="Notion"><NotionIcon /></TaskItem>
        <TaskItem $open aria-label="Edge"><EdgeIcon /></TaskItem>
        <TaskItem $open aria-label="Word"><WordIcon /></TaskItem>
        <Tray>
          <ChevronUp size={13} />
          <StrokeIcon w={10} h={14} color="#fff" sw={1} d="M1.500 4h5v6h-5zM6.500 6l2-1.500v5L6.500 8M2 1.500h4.500M2 12.500h4.500" />
          <StrokeIcon w={13} h={11} color="#fff" sw={1.2} d="M4 3.500h7.500v6H4zM5.500 5h4.500v3H5.500zM1 1v2.500h2.500V1M2.200 4v3" />
          <Wifi size={13} />
          <Volume2 size={13} />
          <Clock>4:12 PM<br />5/8/2026</Clock>
          <Notices aria-label="Notifications">
            <StrokeIcon w={13} h={14} color="#fff" d="M1 1h11v9.500H8L6.500 13 5 10.500H1z" />
          </Notices>
        </Tray>
      </TaskBar>
      <Edge />
    </Window>
  </Page>
)

export default App
